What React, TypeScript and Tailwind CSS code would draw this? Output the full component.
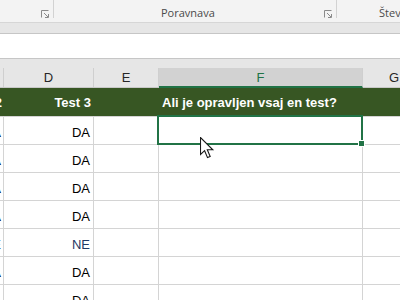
import React from "react";

const Launcher = () => (
  <svg width="8" height="8" viewBox="0 0 8 8" className="block">
    <path d="M0.5 7.5 V0.5 H7.5" fill="none" stroke="#8a8a8a" strokeWidth="1" />
    <path d="M7.5 4 V7.5 H4" fill="none" stroke="#8a8a8a" strokeWidth="1" />
    <path d="M3 3 L7 7" stroke="#8a8a8a" strokeWidth="1" />
  </svg>
);

const Cursor = () => (
  <svg width="15" height="23" viewBox="0 0 15 23" className="block">
    <path
      d="M0.5 0.5 L0.5 17.5 L4.6 13.7 L7.5 20.6 L10.2 19.5 L7.3 12.8 L12.8 12.8 Z"
      fill="#ffffff"
      stroke="#1a1a1a"
      strokeWidth="1.1"
      strokeLinejoin="miter"
    />
  </svg>
);

const values = ["DA", "DA", "DA", "DA", "NE", "DA", "DA"];

export default function App() {
  return (
    <div
      className="w-[400px] h-[300px] overflow-hidden bg-white relative"
      style={{ fontFamily: '"Liberation Sans", Arial, sans-serif' }}
    >
      {/* Ribbon */}
      <div className="h-[23px] bg-[#f3f3f3] border-b border-[#d6d6d6] flex items-start">
        <div className="w-[54px] shrink-0 h-[18px] border-r border-[#d2d2d2] flex justify-end pr-[4px] pt-[10px]">
          <Launcher />
        </div>
        <div
          className="w-[283px] shrink-0 h-[18px] border-r border-[#d2d2d2] relative"
          style={{ fontFamily: '"Open Sans", "Noto Sans", sans-serif' }}
        >
          <span className="absolute left-[107px] top-[6px] text-[11px] leading-[14px] text-[#4a4a4a]">
            Poravnava
          </span>
          <div className="absolute right-[4px] top-[10px]">
            <Launcher />
          </div>
        </div>
        <div
          className="flex-1 relative h-[18px]"
          style={{ fontFamily: '"Open Sans", "Noto Sans", sans-serif' }}
        >
          <span className="absolute left-[42px] top-[6px] text-[11px] leading-[14px] text-[#4a4a4a] whitespace-nowrap">
            Števila
          </span>
        </div>
      </div>
      {/* strip */}
      <div className="h-[11px] bg-[#e6e6e6] border-b border-[#c6c6c6]" />
      {/* formula bar */}
      <div className="h-[25px] bg-white border-b border-[#c6c6c6]" />
      {/* spacer */}
      <div className="h-[9px] bg-[#e6e6e6]" />
      {/* column headers */}
      <div className="h-[20px] flex bg-[#e6e6e6] border-b border-[#c8c8c8] text-[13px] leading-[15px] text-[#262626]">
        <div className="w-[4px] shrink-0 border-r border-[#cfcfcf]" />
        <div className="w-[90px] shrink-0 border-r border-[#cfcfcf] flex items-center justify-center pb-[1px]">D</div>
        <div className="w-[65px] shrink-0 border-r border-[#cfcfcf] flex items-center justify-center pb-[1px]">E</div>
        <div className="w-[204px] shrink-0 bg-[#d2d2d2] border-r border-[#cfcfcf] border-b-2 border-b-[#217346] -mb-[1px] flex items-center justify-center text-[#217346] pt-[1px]">
          F
        </div>
        <div className="w-[62px] shrink-0 flex items-center justify-center pb-[1px]">G</div>
      </div>
      {/* green header row */}
      <div className="h-[29px] flex bg-[#375623] border-b border-[#d4d4d4] text-white font-bold text-[13px] leading-[15px]">
        <div className="w-[4px] shrink-0 overflow-hidden flex justify-end items-end pb-[6px] pr-[2px] whitespace-nowrap">
          <span>Test 2</span>
        </div>
        <div className="w-[90px] shrink-0 flex justify-end items-end pb-[6px] pr-[3px] whitespace-nowrap">Test 3</div>
        <div className="w-[65px] shrink-0" />
        <div className="w-[204px] shrink-0 flex items-end pb-[6px] pl-[3px] whitespace-nowrap">Ali je opravljen vsaj en test?</div>
        <div className="flex-1" />
      </div>
      {/* data rows */}
      {values.map((v, i) => (
        <div
          key={i}
          className={`h-[28px] flex border-b border-[#d4d4d4] text-[13px] leading-[15px] ${
            v === "NE" ? "text-[#1f3864]" : "text-black"
          }`}
        >
          <div className="w-[4px] shrink-0 border-r border-[#d4d4d4] overflow-hidden flex justify-end items-end pb-[4px] pr-[2px] whitespace-nowrap">
            <span>{v}</span>
          </div>
          <div className="w-[90px] shrink-0 border-r border-[#d4d4d4] flex justify-end items-end pb-[4px] pr-[3px]">
            {v}
          </div>
          <div className="w-[65px] shrink-0 border-r border-[#d4d4d4]" />
          <div className="w-[204px] shrink-0 border-r border-[#d4d4d4] relative">
            {i === 0 && (
              <div className="absolute -top-[2px] -left-[2px] right-[-1px] bottom-[-1px] border-2 border-[#217346] z-10">
                <div className="absolute -right-[4px] -bottom-[4px] w-[7px] h-[7px] bg-[#217346] border border-white" />
              </div>
            )}
          </div>
          <div className="flex-1" />
        </div>
      ))}
      {/* mouse cursor */}
      <div className="absolute left-[200px] top-[137px] z-20">
        <Cursor />
      </div>
    </div>
  );
}
